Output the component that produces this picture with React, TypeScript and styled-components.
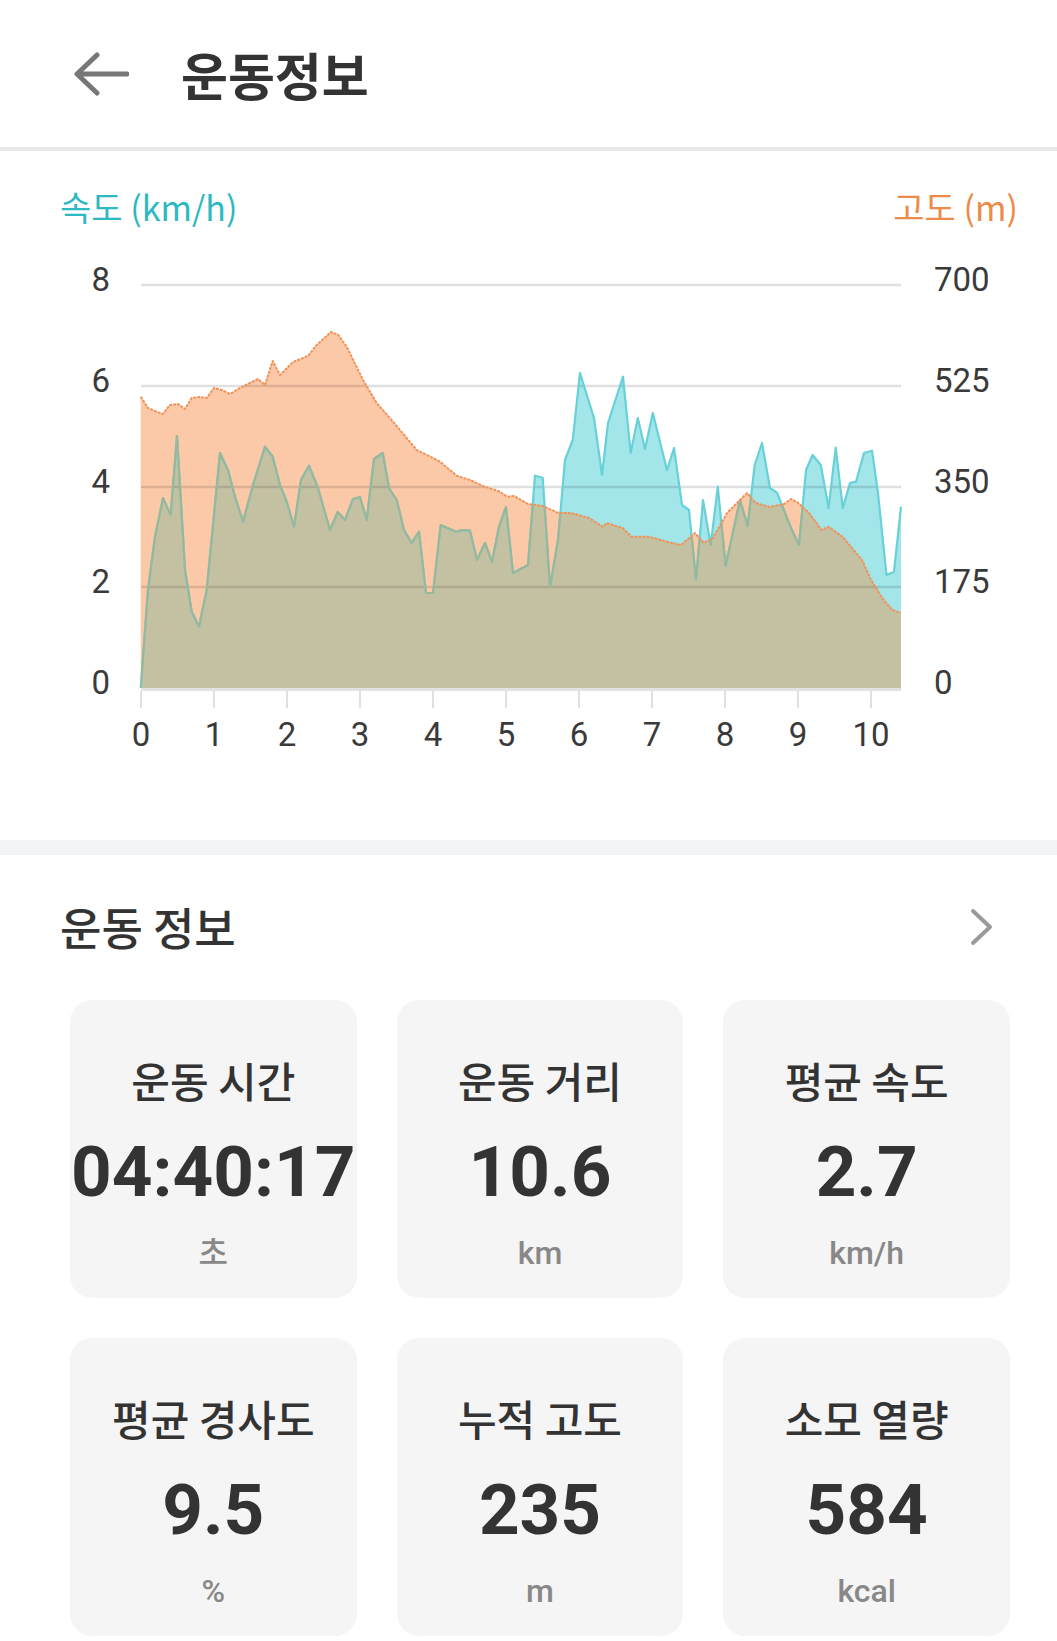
import React from "react";
import styled, { createGlobalStyle } from "styled-components";

const GlobalStyle = createGlobalStyle`
  html, body { margin: 0; padding: 0; background: #ffffff; }
  body { font-family: "Noto Sans CJK KR", "Noto Sans", Roboto, sans-serif; color: #333; }
`;

const Page = styled.div`
  width: 1057px;
  background: #fff;
`;

const Header = styled.header`
  height: 147px;
  display: flex;
  align-items: center;
  padding-left: 73px;
  gap: 52px;
  border-bottom: 4px solid #e7e7e7;
`;

const BackButton = styled.button`
  border: 0;
  background: transparent;
  padding: 0;
  width: 56px;
  height: 44px;
  display: flex;
  cursor: pointer;
`;

const HeaderTitle = styled.h1`
  margin: 0;
  font-size: 51px;
  line-height: 60px;
  font-weight: 700;
  color: #333;
  letter-spacing: 0;
`;

const ChartSection = styled.section`
  padding: 34px 0 71px;
`;

const LegendRow = styled.div`
  display: flex;
  justify-content: space-between;
  align-items: center;
  height: 44px;
  padding: 0 39px 0 60px;
`;

const LegendLabel = styled.span<{ $color: string }>`
  font-size: 34px;
  line-height: 44px;
  font-weight: 400;
  color: ${(p) => p.$color};
`;

const ChartSvg = styled.svg`
  display: block;
  width: 1057px;
  height: 540px;
`;

const AxisText = styled.text`
  font-family: Roboto, "Noto Sans", sans-serif;
  font-size: 33px;
  fill: #3a3a3a;
`;

const Band = styled.div`
  height: 15px;
  background: #f2f3f5;
`;

const StatsSection = styled.section`
  padding: 44px 0 0;
`;

const StatsHeader = styled.div`
  display: flex;
  justify-content: space-between;
  align-items: center;
  height: 56px;
  padding: 0 62px 0 60px;
`;

const StatsTitle = styled.h2`
  margin: 0;
  font-size: 45px;
  line-height: 56px;
  font-weight: 500;
  color: #333;
`;

const CardGrid = styled.div`
  display: grid;
  grid-template-columns: repeat(3, 1fr);
  gap: 40px;
  padding: 0 47px 0 70px;
  margin-top: 45px;
`;

const Card = styled.div`
  height: 298px;
  background: #f5f5f5;
  border-radius: 22px;
  display: flex;
  flex-direction: column;
  align-items: center;
  padding-top: 58px;
  box-sizing: border-box;
`;

const CardLabel = styled.div`
  font-size: 42px;
  line-height: 44px;
  font-weight: 500;
  color: #333;
  white-space: nowrap;
`;

const CardValue = styled.div`
  margin-top: 30px;
  font-family: Roboto, "Noto Sans", sans-serif;
  font-size: 71px;
  line-height: 80px;
  font-weight: 700;
  color: #333;
  white-space: nowrap;
`;

const CardUnit = styled.div`
  margin-top: 22px;
  font-family: Roboto, "Noto Sans CJK KR", sans-serif;
  font-size: 32px;
  line-height: 38px;
  font-weight: 500;
  color: #888;
`;

type Pt = [number, number];

// Traced chart points in chart pixel space
const elevation: Pt[] = [
  [140.7, 396.7], [148, 408], [155, 411], [162.7, 414], [170, 405], [178, 404], [185, 409],
  [191.7, 398], [200, 397], [206.7, 398], [214, 388], [221.7, 390], [230, 394], [241.7, 387],
  [258, 379], [265, 385], [272.7, 361], [280, 375], [293, 362], [308, 356], [316.7, 345],
  [331, 332], [338, 334.7], [346.7, 346.7], [363, 380], [376.7, 403], [393, 421.7],
  [416.7, 450], [433, 458], [440, 461.7], [456.7, 475.7], [470, 480], [483, 486], [500, 491.7],
  [507, 496.7], [514, 496], [528, 504], [542.6, 506], [558.6, 513], [571, 513], [588.8, 518],
  [603, 526.7], [606.6, 523], [622.6, 528], [631.4, 536.7], [649, 536.7], [667, 541.7],
  [681, 545], [695, 533], [704, 543], [713, 538], [727, 513], [747, 493], [755.8, 503],
  [770, 507], [784, 504], [791, 499], [798, 502.7], [809, 513], [821.5, 530], [828.6, 526.7],
  [842.8, 537], [862, 560], [871, 580], [883.6, 600], [892.5, 610], [901, 613],
];

const speed: Pt[] = [
  [140.7, 688], [148, 590], [155, 536.7], [163, 498], [170.7, 515], [177, 436], [185, 570],
  [191.7, 611.7], [199, 626.7], [206.7, 590], [220, 453], [228, 470], [235, 496.7],
  [243, 521.7], [253, 485], [265, 446.7], [272.7, 456.7], [280, 485], [286.7, 501.7],
  [294, 526.7], [301, 480], [309, 465.7], [318, 488], [330, 530], [337.7, 512], [345, 520],
  [353, 499], [360, 497], [366.7, 520], [374, 459], [382.7, 453], [389, 488], [396.7, 500],
  [404, 530], [411.7, 543], [419, 531.7], [426, 593], [433, 593], [440.7, 525], [456, 531.7],
  [461.7, 530], [470, 530.7], [477, 560], [485, 543], [492, 561.7], [499, 526.7], [506, 507],
  [513, 573], [528, 565], [535, 475.7], [542.7, 477.7], [550, 587], [558, 540], [565, 460],
  [572.7, 440], [580, 373], [594, 418], [602, 475], [608, 423], [623, 376.7], [630.7, 453],
  [637.8, 418], [645, 449], [652.8, 413], [667, 470], [674, 448], [682, 505], [689, 510],
  [696, 580], [703, 500], [710.7, 545], [717.8, 486.7], [725.6, 565.7], [740, 500],
  [747.6, 526], [754.7, 465], [762, 443], [770, 488], [777, 492.7], [791, 528], [799, 545],
  [806, 470], [812.6, 455], [820.8, 465], [828.6, 508], [835.7, 447.7], [842.8, 508],
  [850, 483], [856, 481.7], [864, 453], [872, 450.7], [878, 493], [886.5, 575], [894, 571.7],
  [901, 506.7],
];

const BASE = 688;
const X0 = 141;
const X1 = 901;
const KM = 73;

const linePath = (pts: Pt[]) => pts.map((p, i) => `${i ? "L" : "M"}${p[0]} ${p[1]}`).join(" ");
const areaPath = (pts: Pt[]) =>
  `M${pts[0][0]} ${BASE} ` + pts.map((p) => `L${p[0]} ${p[1]}`).join(" ") + ` L${pts[pts.length - 1][0]} ${BASE} Z`;

const gridYs = [285, 386, 487, 587];
const leftLabels = ["8", "6", "4", "2", "0"];
const rightLabels = ["700", "525", "350", "175", "0"];
const labelYs = [285, 386, 487, 587, 688];

const Chart: React.FC = () => (
  <ChartSvg viewBox="0 229 1057 540">
    <defs>
      <clipPath id="elevClip">
        <path d={areaPath(elevation)} />
      </clipPath>
    </defs>
    <path d={areaPath(elevation)} fill="#fcc9a8" />
    <path d={areaPath(speed)} fill="#a2e6ea" />
    <path d={areaPath(speed)} fill="#c4c1a3" clipPath="url(#elevClip)" />
    {gridYs.map((y) => (
      <line key={y} x1={X0} x2={X1} y1={y} y2={y} stroke="rgba(0,0,0,0.12)" strokeWidth={2.5} />
    ))}
    <path d={linePath(speed)} fill="none" stroke="#68d1d7" strokeWidth={2.2} strokeLinejoin="round" />
    <path d={linePath(speed)} fill="none" stroke="#9bb799" strokeWidth={2.2} strokeLinejoin="round" clipPath="url(#elevClip)" />
    <path d={linePath(elevation)} fill="none" stroke="#ef935a" strokeWidth={2} strokeLinejoin="round" strokeDasharray="3 1" />
    <line x1={X0} x2={X1} y1={BASE + 1.5} y2={BASE + 1.5} stroke="#e2e2e2" strokeWidth={3} />
    {Array.from({ length: 11 }, (_, i) => (
      <line key={i} x1={X0 + i * KM} x2={X0 + i * KM} y1={691} y2={708} stroke="#e0e0e0" strokeWidth={2} />
    ))}
    {leftLabels.map((t, i) => (
      <AxisText key={"l" + t} x={110} y={labelYs[i] + 6} textAnchor="end">{t}</AxisText>
    ))}
    {rightLabels.map((t, i) => (
      <AxisText key={"r" + t} x={934} y={labelYs[i] + 6} textAnchor="start">{t}</AxisText>
    ))}
    {Array.from({ length: 11 }, (_, i) => (
      <AxisText key={"x" + i} x={X0 + i * KM} y={746} textAnchor="middle">{i}</AxisText>
    ))}
  </ChartSvg>
);

const stats = [
  { label: "운동 시간", value: "04:40:17", unit: "초" },
  { label: "운동 거리", value: "10.6", unit: "km" },
  { label: "평균 속도", value: "2.7", unit: "km/h" },
  { label: "평균 경사도", value: "9.5", unit: "%" },
  { label: "누적 고도", value: "235", unit: "m" },
  { label: "소모 열량", value: "584", unit: "kcal" },
];

export default function App() {
  return (
    <Page>
      <GlobalStyle />
      <Header>
        <BackButton aria-label="back">
          <svg width="56" height="44" viewBox="0 0 56 44">
            <path d="M54 22 H5 M24 3 L4 22 L24 41" fill="none" stroke="#777" strokeWidth="5" strokeLinecap="round" strokeLinejoin="round" />
          </svg>
        </BackButton>
        <HeaderTitle>운동정보</HeaderTitle>
      </Header>
      <ChartSection>
        <LegendRow>
          <LegendLabel $color="#2cb9c2">속도 (km/h)</LegendLabel>
          <LegendLabel $color="#ec8a48">고도 (m)</LegendLabel>
        </LegendRow>
        <Chart />
      </ChartSection>
      <Band />
      <StatsSection>
        <StatsHeader>
          <StatsTitle>운동 정보</StatsTitle>
          <svg width="26" height="38" viewBox="0 0 26 38">
            <path d="M4 3 L21 19 L4 35" fill="none" stroke="#9a9a9a" strokeWidth="4" strokeLinecap="round" strokeLinejoin="round" />
          </svg>
        </StatsHeader>
        <CardGrid>
          {stats.map((s) => (
            <Card key={s.label}>
              <CardLabel>{s.label}</CardLabel>
              <CardValue>{s.value}</CardValue>
              <CardUnit>{s.unit}</CardUnit>
            </Card>
          ))}
        </CardGrid>
      </StatsSection>
    </Page>
  );
}
